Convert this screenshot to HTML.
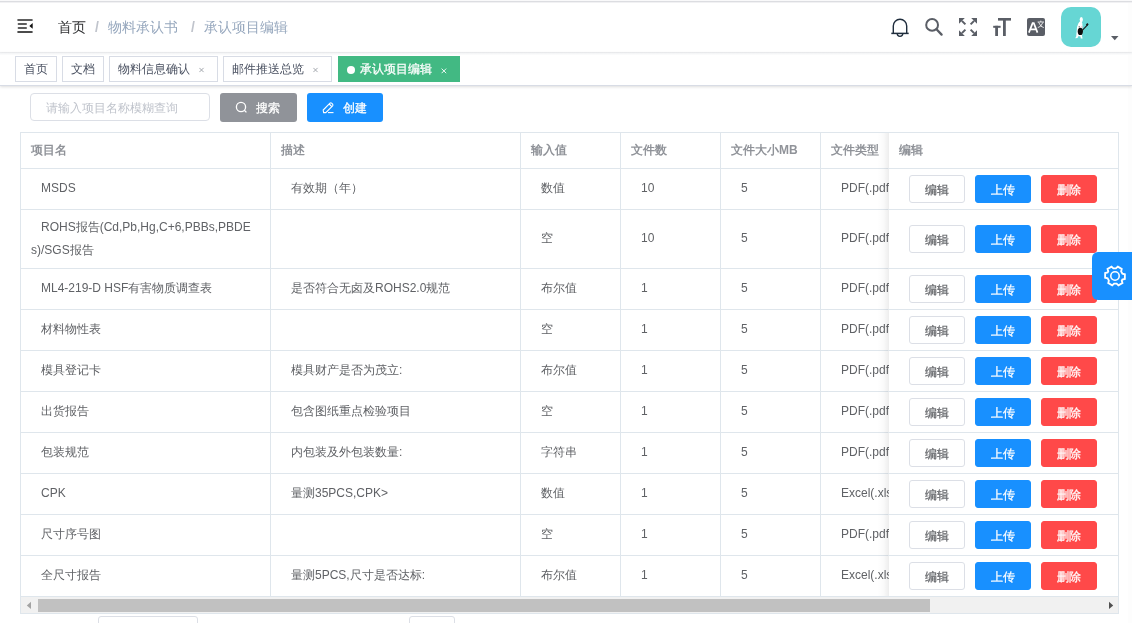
<!DOCTYPE html>
<html><head><meta charset="utf-8">
<style>
*{box-sizing:border-box;margin:0;padding:0}
html,body{width:1132px;height:623px;overflow:hidden;background:#fff;font-family:"Liberation Sans",sans-serif;position:relative}
body{will-change:transform}
.abs{position:absolute}
#topline{position:absolute;left:0;top:0;width:1132px;height:3px;background:linear-gradient(#f4f4f6,#dcdde1 50%,#f4f4f6)}
#navbar{position:absolute;left:0;top:3px;width:1132px;height:49px}
#navshadow{position:absolute;left:0;top:52px;width:1132px;height:3px;background:linear-gradient(#eeeff2,#f6f7f8 60%,#fdfdfd)}
.bc{position:absolute;top:14px;font-size:14px;line-height:20px;white-space:nowrap}
#tags{position:absolute;left:0;top:53px;width:1132px;height:33px;border-bottom:1px solid #d8dce5;box-shadow:0 1px 3px 0 rgba(0,0,0,.12),0 0 3px 0 rgba(0,0,0,.04)}
.tag{position:absolute;top:3px;height:26px;border:1px solid #d8dce5;background:#fff;color:#495060;font-size:12px;line-height:24px;padding-left:8px;white-space:nowrap}
.tag .x{position:absolute;font-size:11px;color:#8a8f99}
.tag.active{background:#42b983;border-color:#42b983;color:#fff}
.btn{position:absolute;height:29px;border-radius:3px;font-size:12px;color:#fff;line-height:28px;white-space:nowrap}
.hl{position:absolute;height:1px;background:#dfe6ec}
.vl{position:absolute;width:1px;background:#dfe6ec}
.th{position:absolute;font-size:12px;font-weight:bold;color:#909399;line-height:23px;white-space:nowrap}
.td{position:absolute;font-size:12px;color:#606266;line-height:23px;white-space:nowrap}
#tbl{position:absolute;left:0;top:0}
#tblborder{position:absolute;left:20px;top:132px;width:1099px;height:482px;border:1px solid #dfe6ec}
#fixed{position:absolute;left:0;top:0}
#fixedbg{position:absolute;left:889px;top:133px;width:229px;height:463px;background:#fff}
#fixedshadow{position:absolute;left:877px;top:133px;width:12px;height:463px;background:linear-gradient(90deg,rgba(0,0,0,0),rgba(0,0,0,.015) 50%,rgba(0,0,0,.07))}
.bbtn{position:absolute;width:56px;height:28px;border-radius:3px;font-size:12px;line-height:26px;padding-top:1px;text-align:center;border:1px solid}
.bbtn.def{background:#fff;border-color:#dcdfe6;color:#606266}
.bbtn.pri{background:#1890ff;border-color:#1890ff;color:#fff}
.bbtn.dan{background:#ff4949;border-color:#ff4949;color:#fff}
.bbtn.pri,.bbtn.dan,.btn span,.tag.active span{-webkit-text-stroke:0.25px #fff}
.bbtn.def{-webkit-text-stroke:0.2px #606266}
</style></head><body>
<div class="abs" style="left:1128px;top:0;width:4px;height:623px;background:#fdfdfd"></div>
<div class="abs" style="left:0;top:0;width:1132px;height:1px;background:#f9f9fa"></div><div class="abs" style="left:0;top:1px;width:1132px;height:1px;background:#dcdde1"></div><div class="abs" style="left:0;top:2px;width:1132px;height:1px;background:#f1f1f3"></div>
<div id="navbar">
  <svg class="abs" style="left:17px;top:16px" width="16" height="14" viewBox="0 0 16 14">
    <rect x="0.2" y="0.2" width="15.6" height="1.6" rx="0.8" fill="#2a2a2a"/>
    <rect x="0.6" y="4.2" width="9.4" height="1.6" rx="0.8" fill="#2a2a2a"/>
    <rect x="0.6" y="8.2" width="9.4" height="1.6" rx="0.8" fill="#2a2a2a"/>
    <rect x="0.2" y="12.2" width="15.6" height="1.6" rx="0.8" fill="#111"/>
    <path d="M12.3 7 L15.7 4 V9.8 Z" fill="#111"/>
  </svg>
  <div class="bc" style="left:58px;color:#303133">首页</div>
  <div class="bc" style="left:95px;color:#c0c4cc;font-weight:bold">/</div>
  <div class="bc" style="left:108px;color:#97a8be">物料承认书</div>
  <div class="bc" style="left:191px;color:#c0c4cc;font-weight:bold">/</div>
  <div class="bc" style="left:204px;color:#97a8be">承认项目编辑</div>
  <!-- bell -->
  <svg class="abs" style="left:890px;top:14.5px" width="20" height="20" viewBox="0 0 20 20">
    <path d="M3.3 15.4 V8 A6.7 6.7 0 0 1 16.7 8 V15.4" fill="none" stroke="#1f2d3d" stroke-width="1.4"/>
    <path d="M1.3 15.4 H18.7" stroke="#1f2d3d" stroke-width="1.5"/>
    <path d="M7.2 15.6 A2.8 2.8 0 0 0 12.8 15.6" fill="none" stroke="#1f2d3d" stroke-width="1.3"/>
  </svg>
  <!-- search -->
  <svg class="abs" style="left:923px;top:13px" width="22" height="22" viewBox="0 0 22 22">
    <circle cx="9.1" cy="8.9" r="5.9" fill="none" stroke="#5a5e66" stroke-width="2"/>
    <path d="M13.5 13.3 L18.6 18.6" stroke="#5a5e66" stroke-width="2.3" stroke-linecap="round"/>
  </svg>
  <!-- fullscreen -->
  <svg class="abs" style="left:959px;top:15px" width="18" height="18" viewBox="0 0 18 18">
    <g fill="#5a5e66">
      <path d="M0 0 H5.8 L0 5.8 Z"/><path d="M2.2 3.6 L3.6 2.2 L7.1 5.7 L5.7 7.1 Z"/>
      <path d="M18 0 V5.8 L12.2 0 Z"/><path d="M14.4 2.2 L15.8 3.6 L12.3 7.1 L10.9 5.7 Z"/>
      <path d="M0 18 V12.2 L5.8 18 Z"/><path d="M2.2 14.4 L3.6 15.8 L7.1 12.3 L5.7 10.9 Z"/>
      <path d="M18 18 H12.2 L18 12.2 Z"/><path d="M15.8 14.4 L14.4 15.8 L10.9 12.3 L12.3 10.9 Z"/>
    </g>
  </svg>
  <!-- size tT -->
  <svg class="abs" style="left:993px;top:15px" width="18" height="18" viewBox="0 0 18 18">
    <g fill="#5a5e66">
      <rect x="5" y="0" width="13" height="2.6"/><rect x="10" y="0" width="2.8" height="18"/>
      <rect x="0.2" y="7.8" width="7.4" height="2"/><rect x="2.2" y="7.8" width="2.8" height="10.2"/>
    </g>
  </svg>
  <!-- translate -->
  <svg class="abs" style="left:1027px;top:15px" width="18" height="18" viewBox="0 0 18 18">
    <rect x="0" y="0" width="18" height="18" rx="2" fill="#5a5e66"/>
    <path d="M1.9 14.6 L5.6 5.2 H6.8 L10.5 14.6 M3.5 11.3 H8.9" fill="none" stroke="#fff" stroke-width="1.7"/>
    <path d="M10.6 4 H17 M13.8 2.6 V4 M11.6 4.3 Q13.8 9.5 16.8 9.6 M16 4.3 Q13.8 9.5 10.8 9.6" fill="none" stroke="#fff" stroke-width="0.8"/>
  </svg>
  <!-- avatar -->
  <div class="abs" style="left:1061px;top:4px;width:40px;height:40px;border-radius:10px;background:#66d6d4;overflow:hidden">
    <svg width="40" height="40" viewBox="0 0 40 40">
      <ellipse cx="20.3" cy="12.6" rx="1.6" ry="2.6" fill="#fff"/>
      <path d="M19.3 14 Q20.8 14.5 21.3 16 Q21.8 19 21.2 23 Q21.5 27 21 29 L21.6 31.5 L19.8 31.5 L19.4 29.5 L17.5 29 L16.5 31 L14.2 31.2 L15.2 29.5 Q15.6 25 16 20 Q17 15.5 19.3 14 Z" fill="#fff"/>
      <ellipse cx="19.3" cy="24.4" rx="2.6" ry="3.6" fill="#0c0c0c"/>
      <path d="M20.8 23.8 L26.5 17.8" stroke="#1a1a1a" stroke-width="1.1"/>
      <path d="M25.5 18.3 L27 16.6" stroke="#1a1a1a" stroke-width="1.8"/>
      <circle cx="18.2" cy="19.8" r="0.6" fill="#222"/>
      <circle cx="20.9" cy="19.9" r="0.7" fill="#e8a0b0"/>
    </svg>
  </div>
  <svg class="abs" style="left:1111px;top:33px" width="8" height="5" viewBox="0 0 8 5"><path d="M0 0 H7.5 L3.75 4.2 Z" fill="#5a5e66"/></svg>
</div>
<div id="navshadow"></div>
<div id="tags">
  <div class="tag" style="left:15px;width:42px">首页</div>
  <div class="tag" style="left:62px;width:42px">文档</div>
  <div class="tag" style="left:109px;width:109px">物料信息确认<svg class="abs" style="left:89px;top:10px" width="6" height="6" viewBox="0 0 6 6"><path d="M0.4 0.9 L4.6 5.1 M4.6 0.9 L0.4 5.1" stroke="#9a9ea6" stroke-width="0.9"/></svg></div>
  <div class="tag" style="left:223px;width:109px">邮件推送总览<svg class="abs" style="left:89px;top:10px" width="6" height="6" viewBox="0 0 6 6"><path d="M0.4 0.9 L4.6 5.1 M4.6 0.9 L0.4 5.1" stroke="#9a9ea6" stroke-width="0.9"/></svg></div>
  <div class="tag active" style="left:338px;width:122px"><span class="abs" style="left:8px;top:9px;width:8px;height:8px;border-radius:50%;background:#fff"></span><span class="abs" style="left:21px;top:0">承认项目编辑</span><svg class="abs" style="left:102px;top:11px" width="6" height="6" viewBox="0 0 6 6"><path d="M0.6 0.6 L5.2 5.2 M5.2 0.6 L0.6 5.2" stroke="#fff" stroke-width="0.9"/></svg></div>
</div>
<div class="abs" style="left:30px;top:93px;width:180px;height:28px;border:1px solid #dcdfe6;border-radius:4px;font-size:12px;color:#c0c4cc;line-height:26px;padding-left:15px;padding-top:1px">请输入项目名称模糊查询</div>
<div class="btn" style="left:220px;top:93px;width:77px;background:#909399">
  <svg class="abs" style="left:15px;top:8px" width="13" height="13" viewBox="0 0 13 13"><circle cx="6" cy="6" r="4.6" fill="none" stroke="#fff" stroke-width="1.3"/><path d="M9.3 9.3 L11.4 11.4" stroke="#fff" stroke-width="1.3"/></svg>
  <span class="abs" style="left:36px;top:1px">搜索</span></div>
<div class="btn" style="left:307px;top:93px;width:76px;background:#1890ff">
  <svg class="abs" style="left:15px;top:8px" width="13" height="13" viewBox="0 0 13 13"><path d="M1.6 11.6 L1.2 9 L8 2.2 Q8.8 1.5 9.6 2.2 L10.6 3.2 Q11.3 4 10.6 4.8 L3.8 11.6 Z M7.2 3 L9.8 5.6" fill="none" stroke="#fff" stroke-width="1.1"/><path d="M6 11.6 H11.5" stroke="#fff" stroke-width="1.1"/></svg>
  <span class="abs" style="left:36px;top:1px">创建</span></div>
<div id="tblborder"></div>
<div id="tbl">
<div class="th" style="left:31px;top:139px">项目名</div>
<div class="th" style="left:281px;top:139px">描述</div>
<div class="th" style="left:531px;top:139px">输入值</div>
<div class="th" style="left:631px;top:139px">文件数</div>
<div class="th" style="left:731px;top:139px">文件大小MB</div>
<div class="th" style="left:831px;top:139px">文件类型</div>
<div class="vl" style="left:270px;top:132px;height:464px"></div>
<div class="vl" style="left:520px;top:132px;height:464px"></div>
<div class="vl" style="left:620px;top:132px;height:464px"></div>
<div class="vl" style="left:720px;top:132px;height:464px"></div>
<div class="vl" style="left:820px;top:132px;height:464px"></div>
<div class="hl" style="left:20px;top:168px;width:1099px"></div>
<div class="hl" style="left:20px;top:209px;width:1099px"></div>
<div class="hl" style="left:20px;top:268px;width:1099px"></div>
<div class="hl" style="left:20px;top:309px;width:1099px"></div>
<div class="hl" style="left:20px;top:350px;width:1099px"></div>
<div class="hl" style="left:20px;top:391px;width:1099px"></div>
<div class="hl" style="left:20px;top:432px;width:1099px"></div>
<div class="hl" style="left:20px;top:473px;width:1099px"></div>
<div class="hl" style="left:20px;top:514px;width:1099px"></div>
<div class="hl" style="left:20px;top:555px;width:1099px"></div>
<div class="hl" style="left:20px;top:596px;width:1099px"></div>
<div class="td" style="left:41px;top:177px">MSDS</div>
<div class="td" style="left:291px;top:177px">有效期（年）</div>
<div class="td" style="left:541px;top:177px">数值</div>
<div class="td" style="left:641px;top:177px">10</div>
<div class="td" style="left:741px;top:177px">5</div>
<div class="td" style="left:841px;top:177px">PDF(.pdf</div>
<div class="td" style="left:41px;top:216px">ROHS报告(Cd,Pb,Hg,C+6,PBBs,PBDE</div>
<div class="td" style="left:31px;top:239px">s)/SGS报告</div>
<div class="td" style="left:541px;top:227px">空</div>
<div class="td" style="left:641px;top:227px">10</div>
<div class="td" style="left:741px;top:227px">5</div>
<div class="td" style="left:841px;top:227px">PDF(.pdf</div>
<div class="td" style="left:41px;top:277px">ML4-219-D HSF有害物质调查表</div>
<div class="td" style="left:291px;top:277px">是否符合无卤及ROHS2.0规范</div>
<div class="td" style="left:541px;top:277px">布尔值</div>
<div class="td" style="left:641px;top:277px">1</div>
<div class="td" style="left:741px;top:277px">5</div>
<div class="td" style="left:841px;top:277px">PDF(.pdf</div>
<div class="td" style="left:41px;top:318px">材料物性表</div>
<div class="td" style="left:541px;top:318px">空</div>
<div class="td" style="left:641px;top:318px">1</div>
<div class="td" style="left:741px;top:318px">5</div>
<div class="td" style="left:841px;top:318px">PDF(.pdf</div>
<div class="td" style="left:41px;top:359px">模具登记卡</div>
<div class="td" style="left:291px;top:359px">模具财产是否为茂立:</div>
<div class="td" style="left:541px;top:359px">布尔值</div>
<div class="td" style="left:641px;top:359px">1</div>
<div class="td" style="left:741px;top:359px">5</div>
<div class="td" style="left:841px;top:359px">PDF(.pdf</div>
<div class="td" style="left:41px;top:400px">出货报告</div>
<div class="td" style="left:291px;top:400px">包含图纸重点检验项目</div>
<div class="td" style="left:541px;top:400px">空</div>
<div class="td" style="left:641px;top:400px">1</div>
<div class="td" style="left:741px;top:400px">5</div>
<div class="td" style="left:841px;top:400px">PDF(.pdf</div>
<div class="td" style="left:41px;top:441px">包装规范</div>
<div class="td" style="left:291px;top:441px">内包装及外包装数量:</div>
<div class="td" style="left:541px;top:441px">字符串</div>
<div class="td" style="left:641px;top:441px">1</div>
<div class="td" style="left:741px;top:441px">5</div>
<div class="td" style="left:841px;top:441px">PDF(.pdf</div>
<div class="td" style="left:41px;top:482px">CPK</div>
<div class="td" style="left:291px;top:482px">量测35PCS,CPK></div>
<div class="td" style="left:541px;top:482px">数值</div>
<div class="td" style="left:641px;top:482px">1</div>
<div class="td" style="left:741px;top:482px">5</div>
<div class="td" style="left:841px;top:482px">Excel(.xls</div>
<div class="td" style="left:41px;top:523px">尺寸序号图</div>
<div class="td" style="left:541px;top:523px">空</div>
<div class="td" style="left:641px;top:523px">1</div>
<div class="td" style="left:741px;top:523px">5</div>
<div class="td" style="left:841px;top:523px">PDF(.pdf</div>
<div class="td" style="left:41px;top:564px">全尺寸报告</div>
<div class="td" style="left:291px;top:564px">量测5PCS,尺寸是否达标:</div>
<div class="td" style="left:541px;top:564px">布尔值</div>
<div class="td" style="left:641px;top:564px">1</div>
<div class="td" style="left:741px;top:564px">5</div>
<div class="td" style="left:841px;top:564px">Excel(.xls</div>
</div>
<div id="fixed"><div id="fixedshadow"></div><div id="fixedbg"></div>
<div class="hl" style="left:888px;top:168px;width:230px"></div>
<div class="hl" style="left:888px;top:209px;width:230px"></div>
<div class="hl" style="left:888px;top:268px;width:230px"></div>
<div class="hl" style="left:888px;top:309px;width:230px"></div>
<div class="hl" style="left:888px;top:350px;width:230px"></div>
<div class="hl" style="left:888px;top:391px;width:230px"></div>
<div class="hl" style="left:888px;top:432px;width:230px"></div>
<div class="hl" style="left:888px;top:473px;width:230px"></div>
<div class="hl" style="left:888px;top:514px;width:230px"></div>
<div class="hl" style="left:888px;top:555px;width:230px"></div>
<div class="hl" style="left:888px;top:596px;width:230px"></div>
<div class="th" style="left:899px;top:139px">编辑</div>
<div class="bbtn def" style="left:909px;top:175px">编辑</div>
<div class="bbtn pri" style="left:975px;top:175px">上传</div>
<div class="bbtn dan" style="left:1041px;top:175px">删除</div>
<div class="bbtn def" style="left:909px;top:225px">编辑</div>
<div class="bbtn pri" style="left:975px;top:225px">上传</div>
<div class="bbtn dan" style="left:1041px;top:225px">删除</div>
<div class="bbtn def" style="left:909px;top:275px">编辑</div>
<div class="bbtn pri" style="left:975px;top:275px">上传</div>
<div class="bbtn dan" style="left:1041px;top:275px">删除</div>
<div class="bbtn def" style="left:909px;top:316px">编辑</div>
<div class="bbtn pri" style="left:975px;top:316px">上传</div>
<div class="bbtn dan" style="left:1041px;top:316px">删除</div>
<div class="bbtn def" style="left:909px;top:357px">编辑</div>
<div class="bbtn pri" style="left:975px;top:357px">上传</div>
<div class="bbtn dan" style="left:1041px;top:357px">删除</div>
<div class="bbtn def" style="left:909px;top:398px">编辑</div>
<div class="bbtn pri" style="left:975px;top:398px">上传</div>
<div class="bbtn dan" style="left:1041px;top:398px">删除</div>
<div class="bbtn def" style="left:909px;top:439px">编辑</div>
<div class="bbtn pri" style="left:975px;top:439px">上传</div>
<div class="bbtn dan" style="left:1041px;top:439px">删除</div>
<div class="bbtn def" style="left:909px;top:480px">编辑</div>
<div class="bbtn pri" style="left:975px;top:480px">上传</div>
<div class="bbtn dan" style="left:1041px;top:480px">删除</div>
<div class="bbtn def" style="left:909px;top:521px">编辑</div>
<div class="bbtn pri" style="left:975px;top:521px">上传</div>
<div class="bbtn dan" style="left:1041px;top:521px">删除</div>
<div class="bbtn def" style="left:909px;top:562px">编辑</div>
<div class="bbtn pri" style="left:975px;top:562px">上传</div>
<div class="bbtn dan" style="left:1041px;top:562px">删除</div>
</div>
<!-- scrollbar -->
<div class="abs" style="left:21px;top:597px;width:1097px;height:16px;background:#f1f1f1"></div>
<div class="abs" style="left:38px;top:599px;width:892px;height:13px;background:#c1c1c1"></div>
<svg class="abs" style="left:26px;top:601px" width="6" height="9" viewBox="0 0 6 9"><path d="M0.8 4.4 L5 0.8 V8 Z" fill="#a3a3a3"/></svg>
<svg class="abs" style="left:1108px;top:601px" width="6" height="9" viewBox="0 0 6 9"><path d="M5.2 4.4 L1 0.8 V8 Z" fill="#505050"/></svg>
<!-- pagination tops -->
<div class="abs" style="left:98px;top:616px;width:100px;height:20px;border:1px solid #dcdfe6;border-radius:3px"></div>
<div class="abs" style="left:409px;top:616px;width:46px;height:20px;border:1px solid #dcdfe6;border-radius:3px"></div>
<!-- settings -->
<div class="abs" style="left:1092px;top:252px;width:40px;height:48px;background:#1890ff;border-radius:6px 0 0 6px">
<svg class="abs" style="left:12px;top:13px" width="22" height="22" viewBox="0 0 24 24">
  <g transform="rotate(30 12 12)">
  <path d="M9.5 1.6 H14.5 L15.3 4.3 L17.7 5.7 L20.4 5 L22.9 9.4 L20.9 11.3 V12.7 L22.9 14.6 L20.4 19 L17.7 18.3 L15.3 19.7 L14.5 22.4 H9.5 L8.7 19.7 L6.3 18.3 L3.6 19 L1.1 14.6 L3.1 12.7 V11.3 L1.1 9.4 L3.6 5 L6.3 5.7 L8.7 4.3 Z" fill="none" stroke="#fff" stroke-width="2" stroke-linejoin="miter"/>
  </g>
  <circle cx="12" cy="12" r="4.6" fill="none" stroke="#fff" stroke-width="1.7"/>
</svg>
</div>
</body></html>
